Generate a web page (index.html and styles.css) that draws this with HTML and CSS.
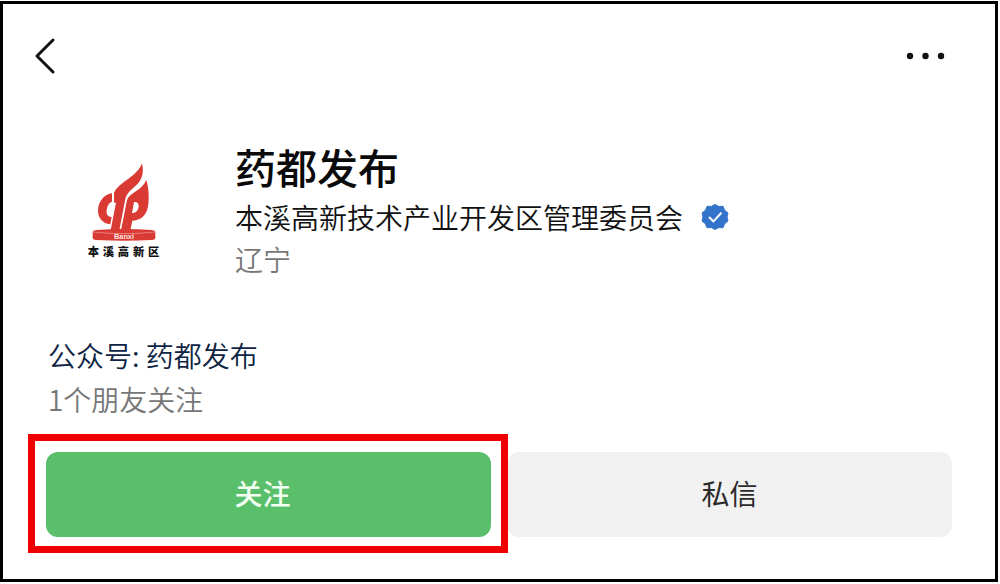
FILE: index.html
```html
<!DOCTYPE html>
<html lang="zh-CN">
<head>
    <meta charset="UTF-8">
    <meta name="viewport" content="width=device-width, initial-scale=1.0">
    <title>药都发布</title>
    <link rel="stylesheet" href="styles.css">
</head>
<body>
    <main class="page">
        <header class="top-bar">
            <button type="button" class="icon-btn" aria-label="返回">
                <svg width="24" height="40" viewBox="0 0 24 40" fill="none" stroke="#111" stroke-width="3" stroke-linecap="round" stroke-linejoin="round">
                    <path d="M19 4L3 20L19 36"/>
                </svg>
            </button>
            <button type="button" class="icon-btn" aria-label="更多">
                <svg width="40" height="8" viewBox="0 0 40 8" fill="#111">
                    <circle cx="4" cy="4" r="3.2"/>
                    <circle cx="19.5" cy="4" r="3.2"/>
                    <circle cx="35" cy="4" r="3.2"/>
                </svg>
            </button>
        </header>

        <section class="profile">
            <svg class="avatar" viewBox="0 0 330 360" role="img" aria-label="本溪高新区">
                <g fill="#d93a34" fill-rule="evenodd">
                    <path d="M126 130C104 132 84 154 84 182C84 204 98 220 121 223L125 201C113 201 108 192 110 180C112 166 118 157 126 155Z"/>
                    <path d="M132 158V128C150 94 202 80 216 40C221 62 219 82 206 98C190 116 172 124 166 146L148 241H122L138 158Z"/>
                    <path d="M229 90C238 118 238 158 232 178C226 200 208 212 187 212L181 241H153L171 150C180 126 216 122 229 90ZM192 156L186 190C198 189 206 180 206 168C206 159 201 155 192 156Z"/>
                    <path d="M68 246Q68 241 80 240Q162 234 244 240Q256 241 256 246V263Q256 269 245 270Q162 275 79 270Q68 269 68 263Z"/>
                </g>
                <path d="M69 246Q162 256 255 246" fill="none" stroke="#f0a39d" stroke-width="2"/>
                <text class="avatar-latin" x="162" y="268">Banxi</text>
                <text class="avatar-name" x="53 98 143 189 234" y="319">本溪高新区</text>
            </svg>
            <div class="info">
                <h1>药都发布</h1>
                <p class="company">
                    本溪高新技术产业开发区管理委员会
                    <svg class="verified" viewBox="0 0 28 28" aria-label="已认证">
                        <path d="M14 1.5L17.6 3.4L22 3.3L23.6 7.2L27 10L26 14L27 18L23.6 20.8L22 24.7L17.6 24.6L14 26.5L10.4 24.6L6 24.7L4.4 20.8L1 18L2 14L1 10L4.4 7.2L6 3.3L10.4 3.4Z" fill="#3473ca" stroke="#3473ca" stroke-linejoin="round"/>
                        <path d="M8 14L12.4 18.4L20.5 9.8" fill="none" stroke="#fff" stroke-width="2"/>
                    </svg>
                </p>
                <p class="region">辽宁</p>
            </div>
        </section>

        <section class="meta">
            <a href="#">公众号: 药都发布</a>
            <p>1个朋友关注</p>
        </section>

        <div class="actions">
            <div class="highlight">
                <button type="button" class="btn follow">关注</button>
            </div>
            <button type="button" class="btn message">私信</button>
        </div>
    </main>
</body>
</html>
```
FILE: styles.css
```css
* {
    margin: 0;
    padding: 0;
    box-sizing: border-box;
    font-family: 'Noto Sans CJK SC', sans-serif;
}

body {
    background-color: white;
    padding: 1px 2px 2px 0;
}

.page {
    border: 3px solid black;
    padding-bottom: 42px;
}

/* Top bar */
.top-bar {
    display: flex;
    justify-content: space-between;
    align-items: center;
    height: 104px;
    padding: 0 49px 0 31px;
}

.icon-btn {
    display: flex;
    background: none;
    border: none;
    cursor: pointer;
}

/* Profile */
.profile {
    display: flex;
    gap: 55px;
    padding: 30px 40px 0 67px;
}

.avatar {
    width: 110px;
    height: 120px;
    flex-shrink: 0;
    margin-top: 12px;
}

.avatar-latin {
    font-family: 'Liberation Sans', sans-serif;
    font-size: 22px;
    font-weight: bold;
    fill: #fbe3e0;
    text-anchor: middle;
}

.avatar-name {
    font-size: 34px;
    font-weight: 900;
    fill: #111;
}

.info h1 {
    font-size: 41px;
    font-weight: 500;
    line-height: 56px;
    color: #0a0a0a;
}

.company {
    display: flex;
    align-items: center;
    gap: 18px;
    padding-top: 2px;
    font-size: 28px;
    font-weight: 350;
    line-height: 42px;
    color: #111;
}

.verified {
    width: 28px;
    height: 28px;
    flex-shrink: 0;
}

.region {
    font-size: 28px;
    font-weight: 350;
    line-height: 42px;
    color: #777;
}

/* Account info */
.meta {
    padding: 53px 45px 31px;
    font-size: 28px;
    font-weight: 350;
    line-height: 44px;
}

.meta a {
    display: block;
    color: #0f2444;
    text-decoration: none;
}

.meta p {
    color: #777;
}

/* Buttons */
.actions {
    display: grid;
    grid-template-columns: 1fr 1fr;
    gap: 16px;
    padding: 0 43px;
}

.btn {
    display: block;
    width: 100%;
    height: 85px;
    padding-bottom: 3px;
    border: none;
    border-radius: 12px;
    font-size: 28px;
    cursor: pointer;
}

.follow {
    padding-right: 12px;
    background: #5abf6b;
    color: #f2fff2;
    font-weight: 500;
}

.message {
    background: #f1f1f1;
    color: #2b2b2b;
    font-weight: 400;
}

.highlight {
    position: relative;
}

.highlight::after {
    content: '';
    position: absolute;
    inset: -18px -17px -16px -18px;
    border: 7px solid #f00000;
    pointer-events: none;
}
```
